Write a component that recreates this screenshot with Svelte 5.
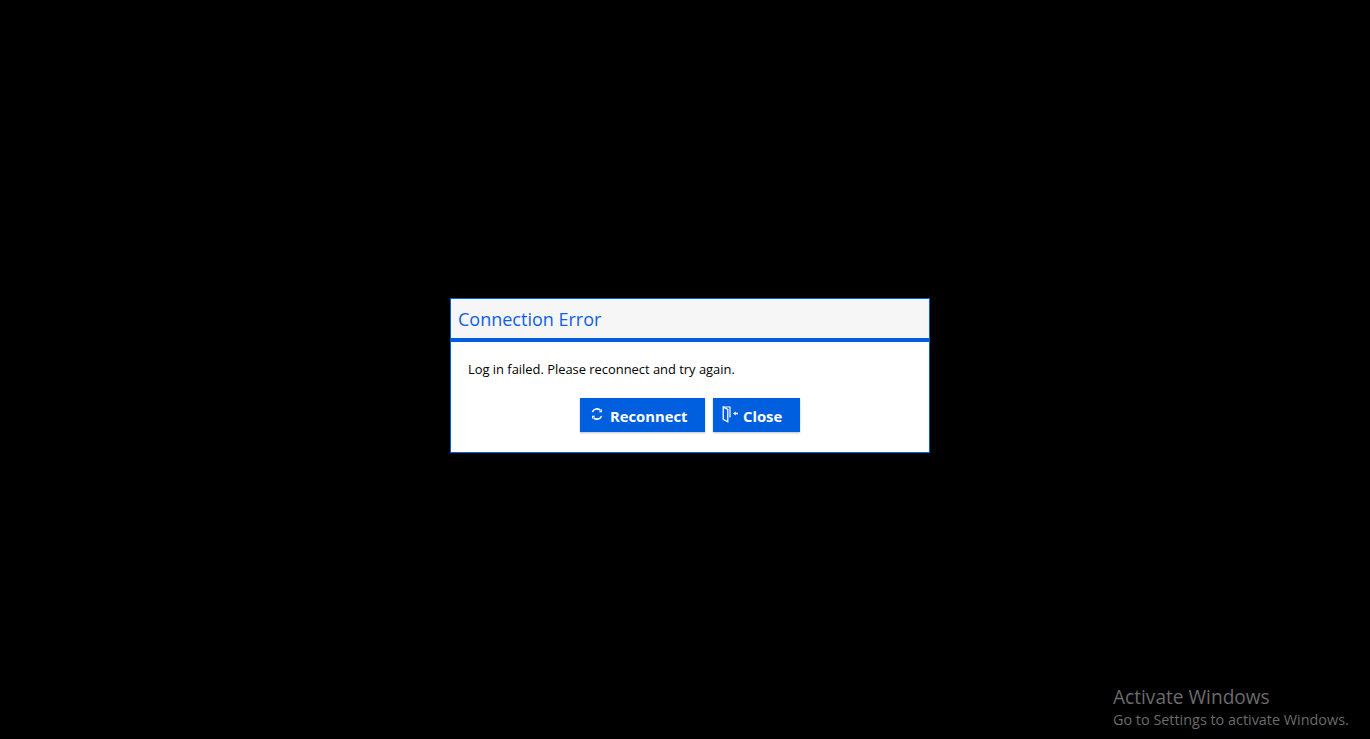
<script>
  let title = 'Connection Error'
  let message = 'Log in failed. Please reconnect and try again.'
</script>

<main class="page">
  <div class="dialog">
    <header class="head">
      <h2>{title}</h2>
    </header>
    <div class="body">
      <p>{message}</p>
      <div class="actions">
        <button class="btn reconnect">
          <svg width="14" height="14" viewBox="0 0 14 14" fill="none" stroke="#fff" stroke-width="1.6">
            <path d="M2.4 5A5 5 0 0 1 10.4 3.2" />
            <path d="M11.6 9A5 5 0 0 1 3.6 10.8" />
            <path d="M12 2v3.2H8.8z" fill="#fff" stroke="none" />
            <path d="M2 12V8.8h3.2z" fill="#fff" stroke="none" />
          </svg>
          Reconnect
        </button>
        <button class="btn close">
          <svg width="17" height="17" viewBox="0 0 17 17" fill="none">
            <path d="M1.2 1H8v10.5" stroke="#fff" stroke-width="1.2" />
            <path d="M1.2 1l4.6 2.4v12.4l-4.6-2.4z" stroke="#fff" stroke-width="1.3" />
            <path d="M11 7.5l2.6-2v1.3H16v1.4h-2.4v1.3z" fill="#fff" />
          </svg>
          Close
        </button>
      </div>
    </div>
  </div>
  <aside class="watermark">
    <div class="wm-title">Activate Windows</div>
    <div class="wm-sub">Go to Settings to activate Windows.</div>
  </aside>
</main>

<style>
  :global(body) {
    margin: 0;
    background: #000;
  }

  .page {
    height: 739px;
    box-sizing: border-box;
    padding: 298px 0 0 450px;
    overflow: hidden;
    font-family: "Open Sans", "Noto Sans", sans-serif;
  }

  .dialog {
    width: 480px;
    height: 155px;
    box-sizing: border-box;
    border: 1px solid #005fdf;
    background: #fff;
  }

  .head {
    height: 43px;
    box-sizing: border-box;
    background: #f6f6f6;
    border-bottom: 4px solid #005fdf;
    padding-left: 7px;
  }

  h2 {
    margin: 0;
    font-size: 18px;
    font-weight: 400;
    line-height: 41px;
    color: #0f5fe6;
  }

  .body {
    padding: 19px 17px 0;
  }

  p {
    margin: 0;
    font-size: 12.9px;
    line-height: 17px;
    color: #000;
  }

  .actions {
    display: flex;
    justify-content: center;
    gap: 8px;
    margin-top: 20px;
  }

  .btn {
    display: flex;
    align-items: center;
    height: 34px;
    box-sizing: border-box;
    border: 0;
    border-radius: 0;
    background: #005fdf;
    color: #fff;
    font-family: inherit;
    font-size: 14.8px;
    font-weight: 700;
    box-shadow: 0 1px 2px rgba(0, 0, 0, 0.25);
  }

  .btn svg {
    margin-top: -4px;
  }

  .reconnect {
    width: 125px;
    padding: 2px 0 0 10px;
    gap: 6px;
  }

  .close {
    width: 87px;
    padding: 2px 0 0 9px;
    gap: 4px;
  }

  .watermark {
    position: absolute;
    left: 1113px;
    top: 685px;
    color: #6b6b6b;
  }

  .wm-title {
    font-size: 19.1px;
    line-height: 25px;
  }

  .wm-sub {
    font-size: 14.4px;
    line-height: 20px;
  }
</style>
